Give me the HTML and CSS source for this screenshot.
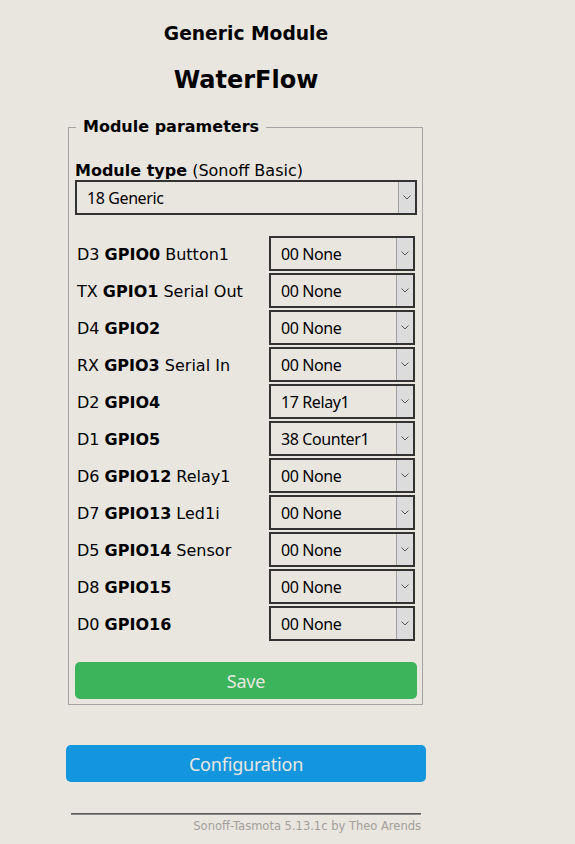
FILE: index.html
```html
<!DOCTYPE html>
<html>
<head>
<meta charset="utf-8">
<link rel="stylesheet" href="styles.css">
</head>
<body>
<div class="page">
  <h3 class="module">Generic Module</h3>
  <h2 class="device">WaterFlow</h2>
  <fieldset class="params">
    <legend class="legend">Module parameters</legend>
    <div class="type-label"><b>Module type</b> (Sonoff Basic)</div>
    <div class="sel sel-wide"><span class="val">18 Generic</span><span class="arr"><svg width="8" height="5" viewBox="0 0 8 5"><path d="M0.5 0.5 L4 4 L7.5 0.5" fill="none" stroke="#555" stroke-width="1"/></svg></span></div>
    <div class="gpio">
      <div class="lbl">D3 <b>GPIO0</b> Button1</div>
      <div class="sel"><span class="val">00 None</span><span class="arr"><svg width="8" height="5" viewBox="0 0 8 5"><path d="M0.5 0.5 L4 4 L7.5 0.5" fill="none" stroke="#555" stroke-width="1"/></svg></span></div>
      <div class="lbl">TX <b>GPIO1</b> Serial Out</div>
      <div class="sel"><span class="val">00 None</span><span class="arr"><svg width="8" height="5" viewBox="0 0 8 5"><path d="M0.5 0.5 L4 4 L7.5 0.5" fill="none" stroke="#555" stroke-width="1"/></svg></span></div>
      <div class="lbl">D4 <b>GPIO2</b></div>
      <div class="sel"><span class="val">00 None</span><span class="arr"><svg width="8" height="5" viewBox="0 0 8 5"><path d="M0.5 0.5 L4 4 L7.5 0.5" fill="none" stroke="#555" stroke-width="1"/></svg></span></div>
      <div class="lbl">RX <b>GPIO3</b> Serial In</div>
      <div class="sel"><span class="val">00 None</span><span class="arr"><svg width="8" height="5" viewBox="0 0 8 5"><path d="M0.5 0.5 L4 4 L7.5 0.5" fill="none" stroke="#555" stroke-width="1"/></svg></span></div>
      <div class="lbl">D2 <b>GPIO4</b></div>
      <div class="sel"><span class="val">17 Relay1</span><span class="arr"><svg width="8" height="5" viewBox="0 0 8 5"><path d="M0.5 0.5 L4 4 L7.5 0.5" fill="none" stroke="#555" stroke-width="1"/></svg></span></div>
      <div class="lbl">D1 <b>GPIO5</b></div>
      <div class="sel"><span class="val">38 Counter1</span><span class="arr"><svg width="8" height="5" viewBox="0 0 8 5"><path d="M0.5 0.5 L4 4 L7.5 0.5" fill="none" stroke="#555" stroke-width="1"/></svg></span></div>
      <div class="lbl">D6 <b>GPIO12</b> Relay1</div>
      <div class="sel"><span class="val">00 None</span><span class="arr"><svg width="8" height="5" viewBox="0 0 8 5"><path d="M0.5 0.5 L4 4 L7.5 0.5" fill="none" stroke="#555" stroke-width="1"/></svg></span></div>
      <div class="lbl">D7 <b>GPIO13</b> Led1i</div>
      <div class="sel"><span class="val">00 None</span><span class="arr"><svg width="8" height="5" viewBox="0 0 8 5"><path d="M0.5 0.5 L4 4 L7.5 0.5" fill="none" stroke="#555" stroke-width="1"/></svg></span></div>
      <div class="lbl">D5 <b>GPIO14</b> Sensor</div>
      <div class="sel"><span class="val">00 None</span><span class="arr"><svg width="8" height="5" viewBox="0 0 8 5"><path d="M0.5 0.5 L4 4 L7.5 0.5" fill="none" stroke="#555" stroke-width="1"/></svg></span></div>
      <div class="lbl">D8 <b>GPIO15</b></div>
      <div class="sel"><span class="val">00 None</span><span class="arr"><svg width="8" height="5" viewBox="0 0 8 5"><path d="M0.5 0.5 L4 4 L7.5 0.5" fill="none" stroke="#555" stroke-width="1"/></svg></span></div>
      <div class="lbl">D0 <b>GPIO16</b></div>
      <div class="sel"><span class="val">00 None</span><span class="arr"><svg width="8" height="5" viewBox="0 0 8 5"><path d="M0.5 0.5 L4 4 L7.5 0.5" fill="none" stroke="#555" stroke-width="1"/></svg></span></div>
    </div>
    <button class="btn btn-save">Save</button>
  </fieldset>
  <button class="btn btn-config">Configuration</button>
  <div class="footer">
    <hr class="rule">
    <span class="credit">Sonoff-Tasmota 5.13.1c by Theo Arends</span>
  </div>
</div>
</body>
</html>
```
FILE: styles.css
```css
html, body {
  margin: 0;
  padding: 0;
  background: #e9e6e0;
}
body {
  font-family: "DejaVu Sans", Verdana, sans-serif;
  font-size: 16px;
  color: #000;
}
.page {
  width: 360px;
  margin-left: 66px;
  padding-top: 23px;
}
.module {
  margin: 0;
  font-size: 18.7px;
  line-height: 22px;
  font-weight: bold;
  text-align: center;
}
.device {
  margin: 21px 0 0;
  font-size: 24px;
  line-height: 28px;
  font-weight: bold;
  text-align: center;
}
.params {
  margin: 23px 3px 0 2px;
  padding: 0 5px 5px 6px;
  border: 1px solid #a3a3a3;
  min-width: 0;
}
.legend {
  margin-left: 1px;
  padding: 0 7px;
  font-weight: bold;
  line-height: 20px;
}
.type-label {
  margin-top: 24px;
  line-height: 19px;
}
.sel {
  display: flex;
  height: 35px;
  box-sizing: border-box;
  border: 2px solid #333;
  background: #e9e6e0;
  font-family: "Noto Sans", "Open Sans", sans-serif;
  font-size: 16px;
  letter-spacing: -0.4px;
}
.val {
  flex: 1;
  padding-left: 10px;
  display: flex;
  align-items: center;
}
.arr {
  width: 16px;
  border-left: 1px solid #a0a0a0;
  background: #dcdcdc;
  display: flex;
  align-items: center;
  justify-content: center;
}
.gpio {
  margin-top: 21px;
  display: grid;
  grid-template-columns: 194px 146px;
  row-gap: 2px;
  align-items: center;
}
.lbl {
  padding-left: 2px;
  padding-top: 1px;
  white-space: nowrap;
}
.btn {
  display: block;
  width: 100%;
  border: 0;
  border-radius: 5px;
  font-family: "Noto Sans", "Open Sans", sans-serif;
  font-size: 18px;
  letter-spacing: -0.2px;
  color: #eae7e1;
  padding: 0;
}
.btn-save {
  margin-top: 21px;
  height: 37px;
  background: #3bb45c;
}
.btn-config {
  margin-top: 40px;
  height: 37px;
  background: #1496df;
}
.footer {
  padding: 0 5px;
  text-align: right;
  font-size: 11.5px;
  line-height: 13px;
}
.rule {
  margin: 31px 0 5px;
  height: 0;
  border: 0;
  border-top: 1px solid #5a5a5a;
  border-bottom: 1px solid #8a8a8a;
}
.credit {
  color: #a39f99;
}
```
